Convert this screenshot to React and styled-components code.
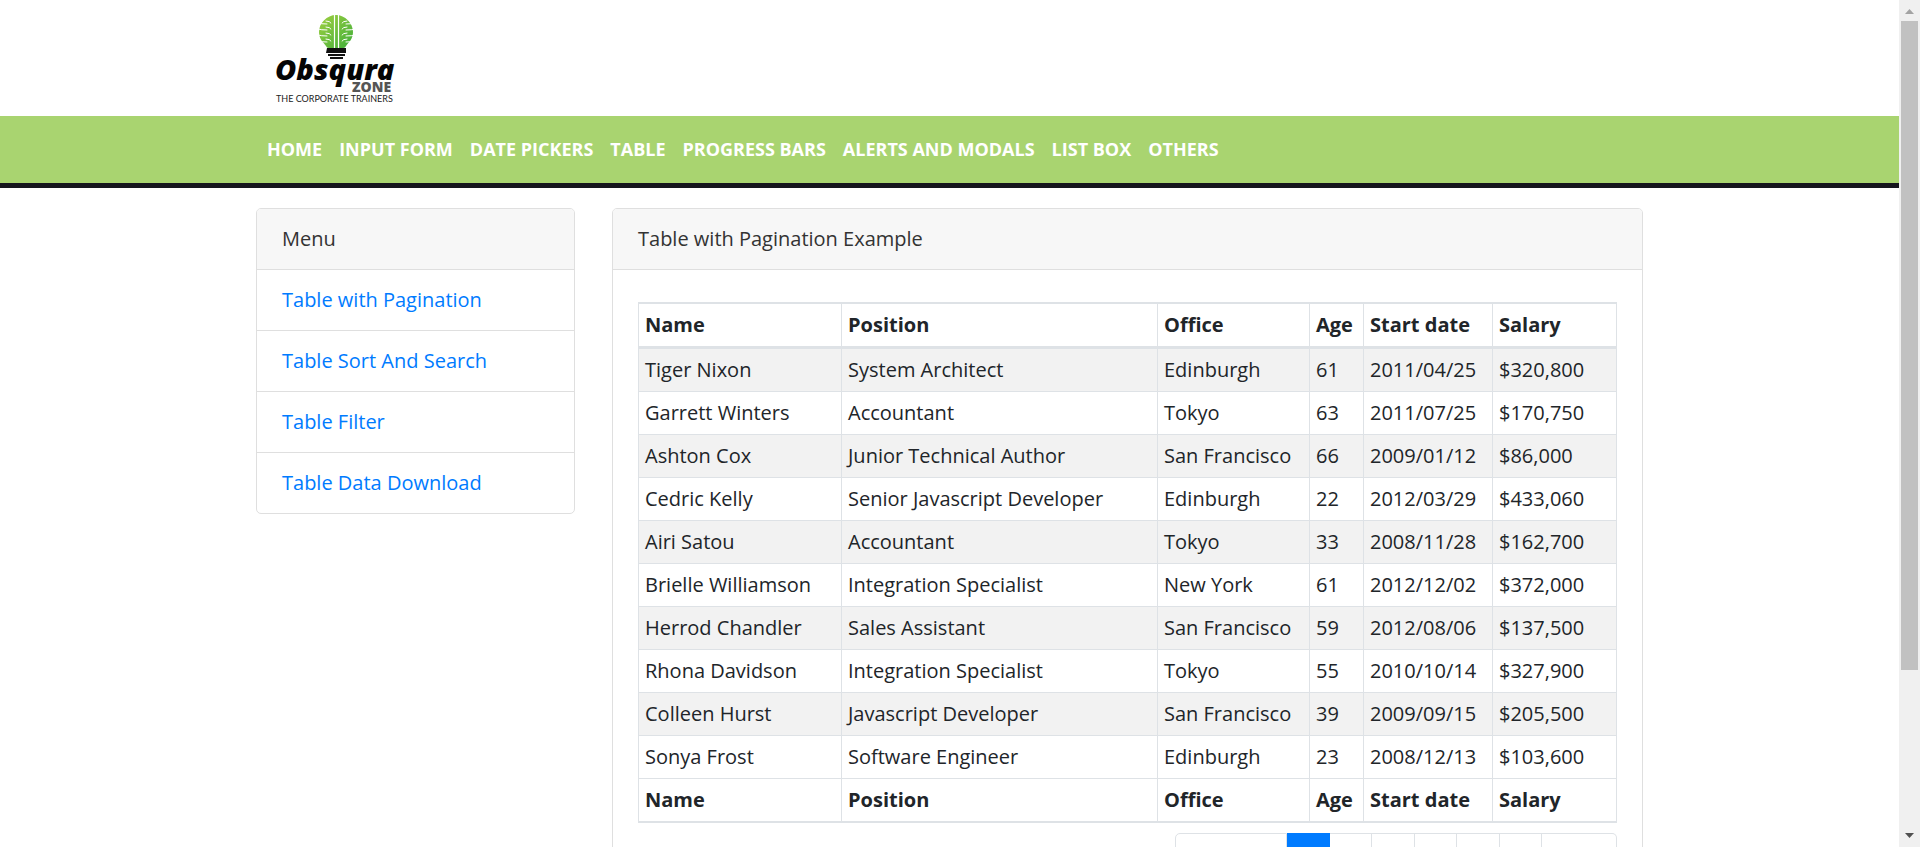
import React from "react";
import styled, { createGlobalStyle } from "styled-components";

const GlobalStyle = createGlobalStyle`
  *, *::before, *::after { box-sizing: border-box; }
  body {
    margin: 0;
    background: #fff;
    color: #212529;
    font-family: "Open Sans", "Noto Sans", sans-serif;
    font-size: 20px;
    line-height: 30px;
  }
`;

const Shell = styled.div`
  display: flex;
  height: 100vh;
  overflow: hidden;
`;

const Page = styled.div`
  flex: 1;
  min-width: 0;
  overflow-y: auto;
  scrollbar-width: none;
`;

const Container = styled.div`
  width: 100%;
  max-width: 1425px;
  margin: 0 auto;
  padding: 0 19px;
`;

const Header = styled.header`
  padding: 5px 0 6px;
`;

const LogoLink = styled.a`
  display: block;
  width: 150px;
  height: 105px;
  margin-left: 4px;
`;

const LogoArt = styled.svg`
  display: block;
`;

const NavBar = styled.nav`
  background: #a9d470;
  border-bottom: 5px solid #15151d;
`;

const NavList = styled.ul`
  display: flex;
  gap: 17px;
  margin: 0;
  padding: 18px 11px 19px;
  list-style: none;
`;

const NavLink = styled.a`
  color: #fff;
  font-size: 18px;
  font-weight: 700;
  text-decoration: none;
  text-transform: uppercase;
  white-space: nowrap;
`;

const Columns = styled.main`
  display: grid;
  grid-template-columns: 319px minmax(0, 1fr);
  align-items: start;
  gap: 37px;
  padding: 20px 0;
`;

const Card = styled.section`
  border: 1px solid #dfdfdf;
  border-radius: 5px;
  background: #fff;
  overflow: hidden;
`;

const CardHeader = styled.div`
  padding: 15px 25px;
  background: #f7f7f7;
  border-bottom: 1px solid #dfdfdf;
  color: #333;
`;

const CardBody = styled.div`
  padding: 32px 25px 25px;
`;

const MenuList = styled.ul`
  margin: 0;
  padding: 0;
  list-style: none;
`;

const MenuItem = styled.li`
  padding: 15px 25px;
  border-bottom: 1px solid #dfdfdf;
  &:last-child { border-bottom: 0; }
`;

const MenuLink = styled.a`
  color: #007bff;
  text-decoration: none;
`;

const DataTable = styled.table`
  width: 100%;
  table-layout: fixed;
  border-collapse: separate;
  border-spacing: 0;
  border: solid #dee2e6;
  border-width: 2px 0 2px 1px;

  th, td {
    padding: 6px;
    border: solid #dee2e6;
    border-width: 0 1px 1px 0;
    text-align: left;
    white-space: nowrap;
  }
  thead th { border-bottom-width: 3px; }
  tfoot th { border-bottom-width: 0; }
  tbody tr:nth-child(odd) { background: #f2f2f2; }
`;

const Col = styled.col`
  width: ${(p) => (p.$width ? `${p.$width}px` : "auto")};
`;

const Pagination = styled.div`
  display: flex;
  justify-content: flex-end;
  margin-top: 10px;
`;

const PageButton = styled.button`
  padding: 10px 15px;
  border: solid ${(p) => (p.$active ? "#007bff" : "#dee2e6")};
  border-width: 1px 1px 1px 0;
  background: ${(p) => (p.$active ? "#007bff" : "#fff")};
  color: ${(p) => (p.$active ? "#fff" : p.disabled ? "#6c757d" : "#007bff")};
  font: inherit;
  &:first-child { border-left-width: 1px; border-radius: 5px 0 0 5px; }
  &:last-child { border-radius: 0 5px 5px 0; }
`;

const ScrollTrack = styled.div`
  display: flex;
  flex-direction: column;
  align-items: center;
  width: 21px;
  background: #f0f0f0;
`;

const ScrollArrow = styled.svg`
  flex: none;
  display: block;
  width: 21px;
  height: 21px;
`;

const ScrollRail = styled.div`
  flex: 1;
  width: 17px;
`;

const ScrollThumb = styled.div`
  height: 80.6%;
  background: #c1c1c1;
`;

function Logo() {
  const outerFolds = [19, 25, 31, 37];
  const innerFolds = [16, 22, 28, 34];
  return (
    <LogoArt width="150" height="105" viewBox="0 0 150 105" role="img" aria-label="Obsqura Zone">
      <defs>
        <linearGradient id="leaf" x1="0" y1="0" x2="1" y2="1">
          <stop offset="0" stopColor="#a0d040" />
          <stop offset="1" stopColor="#3fae3a" />
        </linearGradient>
      </defs>
      <path
        d="M76 10C67 10 59 18 59 27C59 34 63 37 66 41C67 43 68 43 70 43H82C84 43 85 43 86 41C89 37 93 34 93 27C93 18 85 10 76 10Z"
        fill="url(#leaf)"
      />
      <path d="M74.500 9V43M78.500 9V43" stroke="#fff" strokeWidth="1.200" />
      <g stroke="#fff" strokeWidth="1" fill="none" strokeLinecap="round">
        {outerFolds.map((y) => (
          <path key={y} d={`M58 ${y - 1}Q61 ${y} 67 ${y}M95 ${y - 1}Q92 ${y} 86 ${y}`} />
        ))}
        {innerFolds.map((y) => (
          <path key={y} d={`M66 ${y}Q70 ${y} 71 ${y + 2}M87 ${y}Q83 ${y} 82 ${y + 2}`} />
        ))}
      </g>
      <path d="M67 43H86V48H66ZM68 49H85V51H68ZM70 52H83V54H70Z" fill="#111" />
      <text x="15" y="75" fontSize="29" fontWeight="800" fontStyle="italic" fill="#050505">Obsqura</text>
      <text x="92" y="87" fontSize="14" fontWeight="800" fill="#555">ZONE</text>
      <text x="16" y="97" fontSize="9" fontFamily="Lato, sans-serif" fill="#222">THE CORPORATE TRAINERS</text>
    </LogoArt>
  );
}

const navItems = [
  "Home", "Input Form", "Date Pickers", "Table",
  "Progress Bars", "Alerts and Modals", "List Box", "Others",
];

const menuItems = [
  "Table with Pagination", "Table Sort And Search", "Table Filter", "Table Data Download",
];

const columns = [
  { title: "Name", width: 203 },
  { title: "Position", width: 316 },
  { title: "Office", width: 152 },
  { title: "Age", width: 54 },
  { title: "Start date", width: 129 },
  { title: "Salary" },
];

const rows = [
  ["Tiger Nixon", "System Architect", "Edinburgh", "61", "2011/04/25", "$320,800"],
  ["Garrett Winters", "Accountant", "Tokyo", "63", "2011/07/25", "$170,750"],
  ["Ashton Cox", "Junior Technical Author", "San Francisco", "66", "2009/01/12", "$86,000"],
  ["Cedric Kelly", "Senior Javascript Developer", "Edinburgh", "22", "2012/03/29", "$433,060"],
  ["Airi Satou", "Accountant", "Tokyo", "33", "2008/11/28", "$162,700"],
  ["Brielle Williamson", "Integration Specialist", "New York", "61", "2012/12/02", "$372,000"],
  ["Herrod Chandler", "Sales Assistant", "San Francisco", "59", "2012/08/06", "$137,500"],
  ["Rhona Davidson", "Integration Specialist", "Tokyo", "55", "2010/10/14", "$327,900"],
  ["Colleen Hurst", "Javascript Developer", "San Francisco", "39", "2009/09/15", "$205,500"],
  ["Sonya Frost", "Software Engineer", "Edinburgh", "23", "2008/12/13", "$103,600"],
];

const pages = ["1", "2", "3", "4", "5", "6"];

function HeadingRow() {
  return (
    <tr>
      {columns.map((c) => (
        <th key={c.title} scope="col">{c.title}</th>
      ))}
    </tr>
  );
}

export default function App() {
  return (
    <>
      <GlobalStyle />
      <Shell>
        <Page>
          <Header>
            <Container>
              <LogoLink href="#home"><Logo /></LogoLink>
            </Container>
          </Header>
          <NavBar>
            <Container>
              <NavList>
                {navItems.map((item) => (
                  <li key={item}><NavLink href="#nav">{item}</NavLink></li>
                ))}
              </NavList>
            </Container>
          </NavBar>
          <Container>
            <Columns>
              <Card>
                <CardHeader>Menu</CardHeader>
                <MenuList>
                  {menuItems.map((item) => (
                    <MenuItem key={item}><MenuLink href="#menu">{item}</MenuLink></MenuItem>
                  ))}
                </MenuList>
              </Card>
              <Card>
                <CardHeader>Table with Pagination Example</CardHeader>
                <CardBody>
                  <DataTable>
                    <colgroup>
                      {columns.map((c) => <Col key={c.title} $width={c.width} />)}
                    </colgroup>
                    <thead><HeadingRow /></thead>
                    <tbody>
                      {rows.map((row) => (
                        <tr key={row[0]}>
                          {row.map((cell, i) => <td key={columns[i].title}>{cell}</td>)}
                        </tr>
                      ))}
                    </tbody>
                    <tfoot><HeadingRow /></tfoot>
                  </DataTable>
                  <Pagination>
                    <PageButton type="button" disabled>Previous</PageButton>
                    {pages.map((p) => (
                      <PageButton key={p} type="button" $active={p === "1"}>{p}</PageButton>
                    ))}
                    <PageButton type="button">Next</PageButton>
                  </Pagination>
                </CardBody>
              </Card>
            </Columns>
          </Container>
        </Page>
        <ScrollTrack aria-hidden="true">
          <ScrollArrow viewBox="0 0 21 21"><path d="M6 14L10.500 9L15 14Z" fill="#a3a3a3" /></ScrollArrow>
          <ScrollRail><ScrollThumb /></ScrollRail>
          <ScrollArrow viewBox="0 0 21 21"><path d="M6 7L10.500 12L15 7Z" fill="#505050" /></ScrollArrow>
        </ScrollTrack>
      </Shell>
    </>
  );
}
